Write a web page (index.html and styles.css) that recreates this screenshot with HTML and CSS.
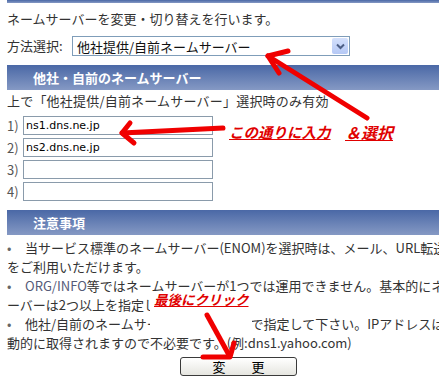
FILE: index.html
```html
<!DOCTYPE html>
<html lang="ja">
<head>
    <meta charset="UTF-8">
    <meta name="viewport" content="width=device-width, initial-scale=1.0">
    <title>ネームサーバー変更</title>
    <link rel="stylesheet" href="styles.css">
</head>
<body>

    <div class="ns-page">
        <div class="top-bar"></div>
        <p class="lead">ネームサーバーを変更・切り替えを行います。</p>

        <div class="method-row">
            <span class="method-label">方法選択:</span>
            <div class="select-box">
                <span class="select-text">他社提供/自前ネームサーバー</span>
                <span class="select-arrow">
                    <svg width="9" height="7" viewBox="0 0 9 7"><path d="M1 1.5 L4.5 5 L8 1.5" fill="none" stroke="#4d5f86" stroke-width="2"/></svg>
                </span>
            </div>
        </div>

        <div class="section-head">他社・自前のネームサーバー</div>
        <p class="hint">上で「他社提供/自前ネームサーバー」選択時のみ有効</p>

        <div class="ns-list">
            <div class="ns-row"><span class="ns-num">1)</span><input type="text" class="ns-input" value="ns1.dns.ne.jp"></div>
            <div class="ns-row"><span class="ns-num">2)</span><input type="text" class="ns-input" value="ns2.dns.ne.jp"></div>
            <div class="ns-row"><span class="ns-num">3)</span><input type="text" class="ns-input" value=""></div>
            <div class="ns-row"><span class="ns-num">4)</span><input type="text" class="ns-input" value=""></div>
        </div>

        <div class="section-head">注意事項</div>
        <div class="notes">
            <div class="note-line"><span class="dot">•</span>当サービス標準のネームサーバー(ENOM)を選択時は、メール、URL転送機能</div>
            <div class="note-line">をご利用いただけます。</div>
            <div class="note-line"><span class="dot">•</span><span class="latin">ORG/INFO</span>等ではネームサーバーが1つでは運用できません。基本的にネームサ</div>
            <div class="note-line">ーバーは2つ以上を指定して下さい。</div>
            <div class="note-line"><span class="dot">•</span>他社/自前のネームサーバーはホスト名で指定して下さい。IPアドレスは自</div>
            <div class="note-line">動的に取得されますので不必要です。(例:dns1.yahoo.com)</div>
        </div>

        <div class="actions">
            <button class="submit-btn">変　　更</button>
        </div>
    </div>

    <!-- 赤い注釈 -->
    <div class="marks">
        <span class="mark-text mark-input">この通りに入力</span>
        <span class="mark-text mark-select">＆選択</span>
        <span class="mark-text mark-click">最後にクリック</span>
        <svg class="mark-arrows" width="439" height="379" viewBox="0 0 439 379">
            <g fill="none" stroke="#f00000" stroke-width="5" stroke-linecap="round" stroke-linejoin="round">
                <path d="M268 56 L367 118"/>
                <path d="M288 51 L268 56 L279 73"/>
                <path d="M122 133 L223 128"/>
                <path d="M130 123 L122 133 L134 143"/>
                <path d="M207 315 L229 355"/>
                <path d="M203 357 L230 357 L234 343"/>
            </g>
        </svg>
    </div>

</body>
</html>
```

FILE: styles.css
```css
body {
    margin: 0;
    padding: 0;
    background-color: #fff;
    color: #333;
    font-family: "Noto Sans CJK JP", sans-serif;
    font-size: 13px;
    width: 439px;
    height: 379px;
    overflow: hidden;
    position: relative;
}
.ns-page {
    width: 463px;
    padding-left: 7px;
}
.top-bar {
    height: 3px;
    background: linear-gradient(#4a68a6, #8599c4);
}
.lead {
    margin: 7px 0 0;
    line-height: 18px;
    white-space: nowrap;
}
.method-row {
    display: flex;
    align-items: center;
    margin-top: 8px;
    height: 20px;
}
.method-label {
    width: 65px;
    line-height: 20px;
}
.select-box {
    width: 278px;
    height: 20px;
    box-sizing: border-box;
    border: 1px solid #7f9db9;
    display: flex;
    align-items: center;
    justify-content: space-between;
    padding: 0 1px 0 4px;
    color: #111;
}
.select-arrow {
    width: 16px;
    height: 16px;
    background: linear-gradient(#d4e0fc, #b5c8f5);
    border-radius: 2px;
    display: flex;
    align-items: center;
    justify-content: center;
}
.section-head {
    margin-top: 9px;
    height: 25px;
    line-height: 25px;
    padding-left: 26px;
    background: linear-gradient(#4a68a6, #8599c4);
    color: #fff;
    font-weight: bold;
}
.hint {
    margin: 2px 0 0;
    line-height: 18px;
    white-space: nowrap;
    letter-spacing: 0.2px;
}
.ns-list {
    margin-top: 6px;
    display: flex;
    flex-direction: column;
    gap: 3px;
}
.ns-row {
    display: flex;
    align-items: center;
    height: 19px;
}
.ns-num {
    width: 16px;
    color: #555;
}
.ns-input {
    width: 190px;
    height: 19px;
    box-sizing: border-box;
    border: 1px solid #8a9bab;
    padding: 0 2px;
    margin: 0;
    font-family: "DejaVu Sans", sans-serif;
    font-size: 11px;
    color: #000;
}
.notes {
    margin-top: 3px;
}
.note-line {
    line-height: 19px;
    white-space: nowrap;
}
.dot {
    display: inline-block;
    width: 18px;
    color: #666;
}
.latin {
    color: #555a78;
}
.actions {
    margin-top: 5px;
    text-align: center;
}
.submit-btn {
    width: 117px;
    height: 19px;
    padding: 0;
    border: 1px solid #3a3a3a;
    border-radius: 3px;
    background: linear-gradient(#ffffff, #e6e6e0);
    font-family: "Noto Sans CJK JP", sans-serif;
    font-size: 13px;
    line-height: 15px;
    color: #000;
}
.marks {
    position: absolute;
    left: 0;
    top: 0;
    width: 439px;
    height: 379px;
    pointer-events: none;
}
.mark-arrows {
    position: absolute;
    left: 0;
    top: 0;
}
.mark-text {
    position: absolute;
    color: #e00000;
    font-weight: bold;
    font-style: italic;
    text-decoration: underline;
    white-space: nowrap;
    line-height: 16px;
}
.mark-input {
    left: 229px;
    top: 124px;
    font-size: 14.5px;
}
.mark-select {
    left: 345px;
    top: 124px;
    font-size: 16px;
}
.mark-click {
    left: 150px;
    top: 291px;
    font-size: 13.5px;
    background: #fff;
    padding: 0 3px 25px 4px;
}
```
